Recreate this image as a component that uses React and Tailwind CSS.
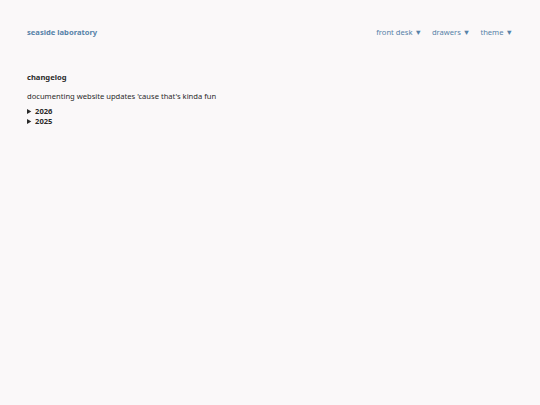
import React from 'react';

const NavItem = ({ label }) => (
    <button className="text-[#5682a8] hover:underline">
        {label} ▼
    </button>
);

export default function App() {
    return (
        <div className="min-h-[405px] w-full bg-[#faf8f9] text-[7.6px] text-[#2b2b2b]" style={{ fontFamily: '"Noto Sans", sans-serif' }}>
            {/* header */}
            <header className="flex items-center justify-between px-[27px] pt-[27px]">
                <a className="font-bold text-[#5682a8]">seaside laboratory</a>
                <nav className="flex items-center gap-[10px]">
                    <NavItem label="front desk" />
                    <NavItem label="drawers" />
                    <NavItem label="theme" />
                </nav>
            </header>

            {/* changelog */}
            <main className="px-[27px] pt-[34px]">
                <h1 className="font-bold">changelog</h1>
                <p className="mt-[7px]">documenting website updates 'cause that's kinda fun</p>
                <div className="mt-[4px] font-bold leading-[10px]">
                    <details>
                        <summary className="cursor-pointer">2026</summary>
                    </details>
                    <details>
                        <summary className="cursor-pointer">2025</summary>
                    </details>
                </div>
            </main>
        </div>
    );
}
